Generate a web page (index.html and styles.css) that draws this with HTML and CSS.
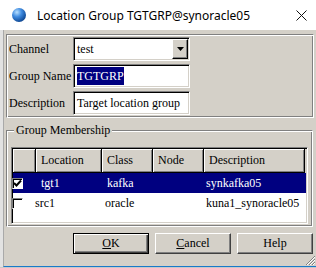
FILE: index.html
```html
<!DOCTYPE html>
<html lang="en">
<head>
    <meta charset="UTF-8">
    <title>Location Group TGTGRP@synoracle05</title>
    <link rel="stylesheet" href="styles.css">
</head>
<body>
    <div class="titlebar">
        <span class="app-icon"></span>
        <span class="title">Location Group TGTGRP@synoracle05</span>
        <svg class="close" width="11" height="11" viewBox="0 0 11 11">
            <path d="M0.5 0.5 L10.5 10.5 M10.5 0.5 L0.5 10.5" stroke="#111" stroke-width="1" fill="none"/>
        </svg>
    </div>
    <div class="main">
        <div class="edge"></div>
        <div class="client">
            <!-- location group properties -->
            <div class="panel">
                <div class="field">
                    <span class="label">Channel</span>
                    <div class="entry combo">
                        <span class="value">test</span>
                        <span class="drop">
                            <svg width="7" height="4" viewBox="0 0 7 4"><path d="M0 0 L7 0 L3.5 4 Z" fill="#000"/></svg>
                        </span>
                    </div>
                </div>
                <div class="field">
                    <span class="label">Group Name</span>
                    <div class="entry"><span class="value selected-text">TGTGRP</span></div>
                </div>
                <div class="field">
                    <span class="label">Description</span>
                    <div class="entry"><span class="value">Target location group</span></div>
                </div>
            </div>

            <!-- members -->
            <div class="group">
                <div class="group-label">Group Membership</div>
                <div class="list">
                    <div class="list-head">
                        <div class="hcell"></div>
                        <div class="hcell">Location</div>
                        <div class="hcell">Class</div>
                        <div class="hcell">Node</div>
                        <div class="hcell">Description</div>
                    </div>
                    <div class="row selected">
                        <span class="check checked">
                            <svg width="9" height="9" viewBox="0 0 9 9"><path d="M1 4 L3.5 6.5 L8 1.5" stroke="#000" stroke-width="2" fill="none"/></svg>
                        </span>
                        <span class="cell pad6">tgt1</span>
                        <span class="cell pad2">kafka</span>
                        <span class="cell">synkafka05</span>
                    </div>
                    <div class="row">
                        <span class="check"></span>
                        <span class="cell">src1</span>
                        <span class="cell">oracle</span>
                        <span class="cell">kuna1_synoracle05</span>
                    </div>
                </div>
            </div>

            <div class="buttons">
                <button class="btn default"><u>O</u>K</button>
                <button class="btn"><u>C</u>ancel</button>
                <button class="btn">Help</button>
            </div>

            <svg class="grip" width="11" height="11" viewBox="0 0 11 11">
                <path d="M10 1 L1 10 M10 4 L4 10 M10 7 L7 10" stroke="#808080" stroke-width="1" fill="none"/>
                <path d="M10 2 L2 10 M10 5 L5 10 M10 8 L8 10" stroke="#fff" stroke-width="1" fill="none"/>
            </svg>
        </div>
    </div>
</body>
</html>
```

FILE: styles.css
```css
body {
    margin: 0;
    width: 316px;
    height: 268px;
    overflow: hidden;
    background-color: #c8c8c8;
    font-family: "Liberation Serif", serif;
    font-size: 12px;
    color: #000;
}
.titlebar {
    height: 30px;
    background-color: #fff;
    display: flex;
    align-items: center;
    padding-left: 12px;
    box-sizing: border-box;
}
.app-icon {
    width: 14px;
    height: 14px;
    border-radius: 50%;
    background: radial-gradient(circle at 35% 30%, #b8e0ff 0, #3f8be0 35%, #14509e 70%, #0a2c63 100%);
}
.title {
    margin-left: 11px;
    font-family: "Noto Sans", sans-serif;
    font-size: 12px;
    color: #000;
    flex: 1;
}
.close {
    margin-right: 9px;
}
.main {
    display: flex;
    height: 237px;
}
.edge {
    width: 3px;
    background-color: #e2e2e2;
}
.client {
    position: relative;
    flex: 1;
    background-color: #d4d0c8;
    border-left: 1px solid #a9a9a9;
    border-bottom: 1px solid #1979ca;
    padding: 4px 2px 0 2px;
    display: flex;
    flex-direction: column;
}
.panel {
    height: 84px;
    box-sizing: border-box;
    border-style: solid;
    border-width: 1px;
    border-color: #808080 #fff #fff #808080;
    box-shadow: inset 1px 1px 0 #fff, inset -1px -1px 0 #808080;
    padding: 2px 0 0 2px;
    display: flex;
    flex-direction: column;
    gap: 3px;
}
.field {
    display: flex;
    align-items: center;
    height: 24px;
}
.label {
    width: 64px;
}
.entry {
    width: 117px;
    height: 24px;
    box-sizing: border-box;
    background-color: #fff;
    border-style: solid;
    border-width: 1px;
    border-color: #808080 #fff #fff #808080;
    box-shadow: inset 1px 1px 0 #000, inset -1px -1px 0 #d4d0c8;
    display: flex;
    align-items: center;
    padding-left: 3px;
}
.value {
    flex: 1;
    white-space: nowrap;
}
.selected-text {
    flex: none;
    background-color: #000080;
    color: #fff;
    line-height: 18px;
}
.drop {
    width: 16px;
    height: 20px;
    box-sizing: border-box;
    margin-right: 1px;
    background-color: #d4d0c8;
    border-style: solid;
    border-width: 1px;
    border-color: #fff #000 #000 #fff;
    box-shadow: inset -1px -1px 0 #808080;
    display: flex;
    align-items: center;
    justify-content: center;
}
.group {
    margin-top: 12px;
    margin-right: 1px;
    height: 97px;
    box-sizing: border-box;
    border-style: solid;
    border-width: 1px;
    border-color: #808080 #fff #fff #808080;
    box-shadow: inset 1px 1px 0 #fff, inset -1px -1px 0 #808080;
    padding: 0 4px 2px 4px;
    display: flex;
    flex-direction: column;
}
.group-label {
    align-self: flex-start;
    margin: -8px 0 0 3px;
    padding: 0 2px;
    line-height: 14px;
    background-color: #d4d0c8;
}
.list {
    margin-top: 10px;
    height: 77px;
    box-sizing: border-box;
    background-color: #fff;
    border-style: solid;
    border-width: 1px;
    border-color: #808080 #fff #fff #808080;
    box-shadow: inset 1px 1px 0 #000, inset -1px -1px 0 #d4d0c8;
    padding: 1px;
}
.list-head {
    display: grid;
    grid-template-columns: 23px 66px 51px 51px 101px;
    height: 24px;
    background-color: #d4d0c8;
}
.hcell {
    border-right: 1px solid #000;
    border-bottom: 1px solid #000;
    box-shadow: inset 1px 1px 0 #fff, inset -1px -1px 0 #808080;
    padding-left: 5px;
    line-height: 22px;
    white-space: nowrap;
}
.row {
    display: grid;
    grid-template-columns: 22px 70px 101px 1fr;
    align-items: center;
    height: 20px;
    white-space: nowrap;
}
.row.selected {
    background-color: #000080;
    color: #fff;
}
.check {
    width: 11px;
    height: 11px;
    box-sizing: border-box;
    margin-left: -1px;
    background-color: #fff;
    border-style: solid;
    border-width: 1px;
    border-color: #808080 #fff #fff #808080;
    box-shadow: inset 1px 1px 0 #000;
    display: flex;
    align-items: center;
    justify-content: center;
}
.pad6 {
    padding-left: 6px;
}
.pad2 {
    padding-left: 2px;
}
.buttons {
    margin-top: 6px;
    margin-right: 1px;
    display: flex;
    justify-content: flex-end;
    gap: 6px;
}
.btn {
    width: 76px;
    height: 21px;
    box-sizing: border-box;
    background-color: #d4d0c8;
    font-family: "Liberation Serif", serif;
    font-size: 12px;
    color: #000;
    border-style: solid;
    border-width: 1px;
    border-color: #fff #404040 #404040 #fff;
    box-shadow: inset -1px -1px 0 #808080;
    padding: 0;
}
.btn.default {
    border-color: #000;
    box-shadow: inset 1px 1px 0 #fff, inset -1px -1px 0 #404040, inset -2px -2px 0 #808080;
}
.grip {
    position: absolute;
    right: 0;
    bottom: 0;
}
```
